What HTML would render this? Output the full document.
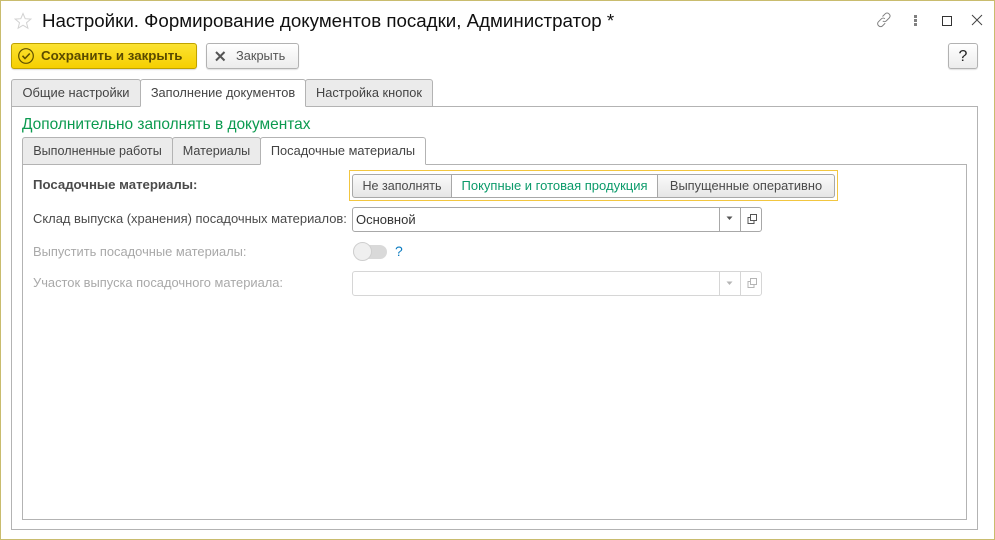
<!DOCTYPE html>
<html lang="ru">
<head>
<meta charset="utf-8">
<title>Настройки</title>
<style>
html,body{margin:0;padding:0;background:#fff}
body{width:995px;height:540px;position:relative;overflow:hidden;font-family:"Liberation Sans",Arial,sans-serif;font-size:13px;color:#4b4b4b}
.a{position:absolute;box-sizing:border-box;white-space:nowrap}
.win{left:0;top:0;width:995px;height:540px;border:1px solid #c9bc6e}
.title{left:42px;top:10px;font-size:18.730px;line-height:22px;color:#101010}
.btn{border:1px solid #b2b2b2;border-radius:3px;background:linear-gradient(#fff,#ececec);box-shadow:0 1px 1px rgba(0,0,0,.12)}
.save{left:11px;top:43px;width:186px;height:26px;border:1px solid #bfa200;border-radius:3px;background:linear-gradient(#fbe232,#f6cf00);box-shadow:0 1px 1px rgba(0,0,0,.15);font-weight:bold;font-size:13.300px;color:#5a4b00;line-height:24px;padding-left:29px}
.panel{border:1px solid #b3b3b3;background:#fff}
.tab{height:28px;border:1px solid #b3b3b3;border-radius:3px 3px 0 0;background:#ebebeb;text-align:center;line-height:26px;font-size:12.800px;color:#444}
.tab.on{background:#fff;border-bottom-color:#fff;z-index:3}
.seg{top:174px;height:24px;border:1px solid #a8a8a8;background:linear-gradient(#fafafa,#e6e6e6);line-height:22px;text-align:center;font-size:13px;color:#4b4b4b}
.lab{font-size:12.900px;line-height:16px}
.field{left:352px;width:410px;height:25px;border:1px solid #a8a8a8;border-radius:3px;background:#fff}
.field.dis{border-color:#d6d6d6}
.sep{top:0;width:1px;height:23px;background:#a8a8a8}
.dis .sep{background:#d6d6d6}
svg{position:absolute;display:block}
</style>
</head>
<body>
<div class="a win"></div>

<svg style="left:14px;top:12px" width="18" height="18" viewBox="0 0 18 18"><path d="M9 1.500l2.200 5.200 5.600.4-4.300 3.600 1.400 5.500L9 13.200l-4.900 3 1.400-5.500L1.200 7.100l5.600-.4z" fill="none" stroke="#d2d2d2" stroke-width="1"/></svg>
<div class="a title">Настройки. Формирование документов посадки, Администратор *</div>

<svg style="left:875px;top:11px" width="18" height="18" viewBox="0 0 18 18" fill="none" stroke="#808080" stroke-width="1"><path d="M7.500 5.500l2.700-2.700a2.600 2.600 0 0 1 3.700 0l.4.400a2.600 2.600 0 0 1 0 3.700l-3 3a2.600 2.600 0 0 1-3.500.1"/><path d="M10.200 12.200l-2.700 2.700a2.600 2.600 0 0 1-3.700 0l-.4-.4a2.600 2.600 0 0 1 0-3.700l3-3a2.600 2.600 0 0 1 3.500-.1"/></svg>
<svg style="left:914px;top:15px" width="3" height="12" viewBox="0 0 3 12" fill="#808080"><rect x="0" y="0" width="3" height="3"/><rect x="0" y="4" width="3" height="3"/><rect x="0" y="8" width="3" height="3"/></svg>
<svg style="left:941px;top:15px" width="12" height="12" viewBox="0 0 12 12"><rect x="1.500" y="1.500" width="9" height="9" fill="none" stroke="#333" stroke-width="1"/></svg>
<svg style="left:970px;top:13px" width="14" height="14" viewBox="0 0 14 14"><path d="M2 2l10 10M12 2L2 12" stroke="#444" stroke-width="1" fill="none"/></svg>

<div class="a save">Сохранить и закрыть</div>
<svg style="left:17px;top:47px" width="18" height="18" viewBox="0 0 18 18" fill="none" stroke="#5f5000" stroke-width="1.200"><circle cx="9" cy="9" r="7.300"/><path d="M5.500 8.800l2.500 2.700 4.800-5" stroke-width="1.600"/></svg>

<div class="a btn" style="left:206px;top:43px;width:93px;height:26px"></div>
<svg style="left:215px;top:51px" width="11" height="11" viewBox="0 0 11 11"><path d="M1 1l8.500 8.500M9.500 1L1 9.500" stroke="#555" stroke-width="2" fill="none"/></svg>
<div class="a" style="left:236px;top:48px;font-size:12.800px;line-height:16px;color:#555">Закрыть</div>

<div class="a btn" style="left:948px;top:43px;width:30px;height:26px;text-align:center;font-size:16px;line-height:25px;color:#222">?</div>

<div class="a panel" style="left:11px;top:106px;width:967px;height:424px"></div>
<div class="a tab" style="left:11px;top:79px;width:130px;font-size:12.900px">Общие настройки</div>
<div class="a tab on" style="left:140px;top:79px;width:166px">Заполнение документов</div>
<div class="a tab" style="left:305px;top:79px;width:128px">Настройка кнопок</div>

<div class="a" style="left:22px;top:116px;font-size:15.450px;line-height:18px;color:#0b9a4f">Дополнительно заполнять в документах</div>

<div class="a panel" style="left:22px;top:164px;width:945px;height:356px"></div>
<div class="a tab" style="left:22px;top:137px;width:151px;font-size:12.600px">Выполненные работы</div>
<div class="a tab" style="left:172px;top:137px;width:89px;font-size:12.600px">Материалы</div>
<div class="a tab on" style="left:260px;top:137px;width:166px">Посадочные материалы</div>

<div class="a lab" style="left:33px;top:177px;font-size:13.200px;font-weight:bold;color:#4b4b4b">Посадочные материалы:</div>

<div class="a" style="left:349px;top:170px;width:489px;height:31px;border:1px solid #f2c640"></div>
<div class="a seg" style="left:352px;width:100px;border-radius:3px 0 0 3px;font-size:12.550px">Не заполнять</div>
<div class="a seg" style="left:451px;width:207px;background:#fff;color:#0b9a6a">Покупные и готовая продукция</div>
<div class="a seg" style="left:657px;width:178px;border-radius:0 3px 3px 0;font-size:12.850px">Выпущенные оперативно</div>

<div class="a lab" style="left:33px;top:211px;color:#4b4b4b;font-size:12.950px">Склад выпуска (хранения) посадочных материалов:</div>
<div class="a field" style="top:207px">
  <div class="a" style="left:3px;top:3px;font-size:13px;line-height:17px;color:#333">Основной</div>
  <div class="a sep" style="left:366px"></div>
  <div class="a sep" style="left:387px"></div>
</div>
<svg style="left:726px;top:216px" width="7" height="5" viewBox="0 0 7 5"><path d="M0.500 0.500h6L3.500 4z" fill="#555"/></svg>
<svg style="left:746px;top:213px" width="12" height="12" viewBox="0 0 12 12" fill="none" stroke="#555" stroke-width="1"><rect x="4.500" y="1.500" width="6" height="6"/><path d="M4.500 4.500h-2.500v6h6V7.500"/></svg>

<div class="a lab" style="left:33px;top:244px;color:#a9a9a9">Выпустить посадочные материалы:</div>
<div class="a" style="left:353px;top:245px;width:34px;height:14px;border-radius:7px;background:#d9d9d9"></div>
<div class="a" style="left:353px;top:242px;width:19px;height:19px;border-radius:50%;background:#efefef;border:1px solid #cfcfcf"></div>
<div class="a" style="left:395px;top:243px;font-size:14px;line-height:17px;color:#0c7cc1">?</div>

<div class="a lab" style="left:33px;top:275px;color:#a9a9a9">Участок выпуска посадочного материала:</div>
<div class="a field dis" style="top:271px">
  <div class="a sep" style="left:366px"></div>
  <div class="a sep" style="left:387px"></div>
</div>
<svg style="left:726px;top:281px" width="7" height="5" viewBox="0 0 7 5"><path d="M0.500 0.500h6L3.500 4z" fill="#b5b5b5"/></svg>
<svg style="left:746px;top:277px" width="12" height="12" viewBox="0 0 12 12" fill="none" stroke="#b5b5b5" stroke-width="1"><rect x="4.500" y="1.500" width="6" height="6"/><path d="M4.500 4.500h-2.500v6h6V7.500"/></svg>
</body>
</html>
